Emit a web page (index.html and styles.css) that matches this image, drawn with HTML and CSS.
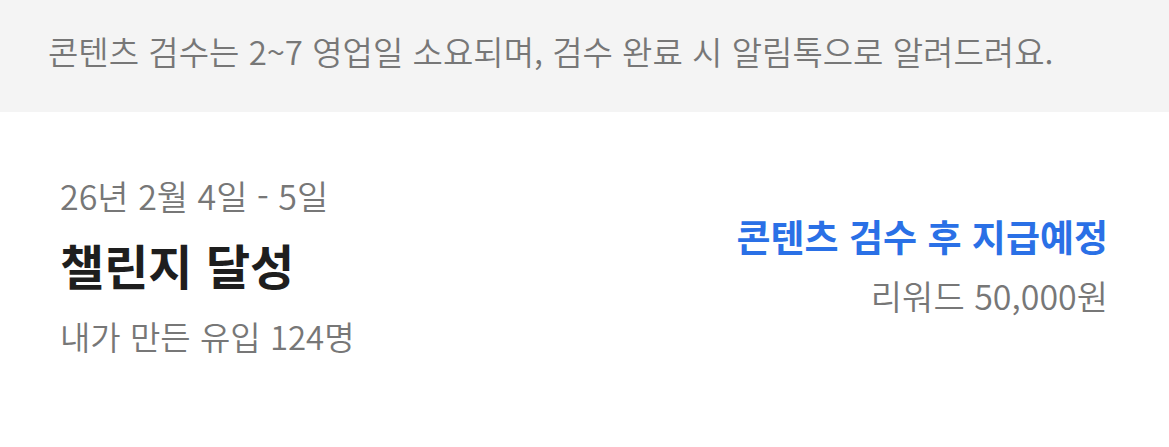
FILE: index.html
```html
<!DOCTYPE html>
<html lang="ko">
<head>
<meta charset="utf-8">
<link rel="stylesheet" href="styles.css">
</head>
<body>
<div class="notice">콘텐츠 검수는 2~7 영업일 소요되며, 검수 완료 시 알림톡으로 알려드려요.</div>
<div class="card">
  <div class="left">
    <div class="date">26년 2월 4일 - 5일</div>
    <div class="title">챌린지 달성</div>
    <div class="count">내가 만든 유입 124명</div>
  </div>
  <div class="right">
    <div class="status">콘텐츠 검수 후 지급예정</div>
    <div class="reward">리워드 50,000원</div>
  </div>
</div>
</body>
</html>
```
FILE: styles.css
```css
html, body {
  margin: 0;
  padding: 0;
  background: #ffffff;
  font-family: "Noto Sans CJK KR", "Noto Sans", sans-serif;
}
.notice {
  height: 112px;
  box-sizing: border-box;
  background: #f4f4f4;
  color: #777777;
  font-size: 33px;
  font-weight: 350;
  padding-left: 48px;
  padding-bottom: 10px;
  display: flex;
  align-items: center;
}
.card {
  display: flex;
  justify-content: space-between;
  align-items: center;
  padding: 56px 61px 0 60px;
}
.left {
  display: flex;
  flex-direction: column;
}
.date {
  font-size: 34px;
  font-weight: 350;
  color: #777777;
  line-height: 56px;
}
.title {
  font-size: 48px;
  font-weight: 700;
  color: #1e1e1e;
  line-height: 80px;
}
.count {
  font-size: 33px;
  font-weight: 350;
  color: #777777;
  line-height: 56px;
  margin-top: 4px;
}
.right {
  display: flex;
  flex-direction: column;
  align-items: flex-end;
}
.status {
  font-size: 37px;
  font-weight: 700;
  color: #2a70e6;
  line-height: 60px;
}
.reward {
  font-size: 34px;
  font-weight: 350;
  color: #777777;
  line-height: 60px;
}
```
